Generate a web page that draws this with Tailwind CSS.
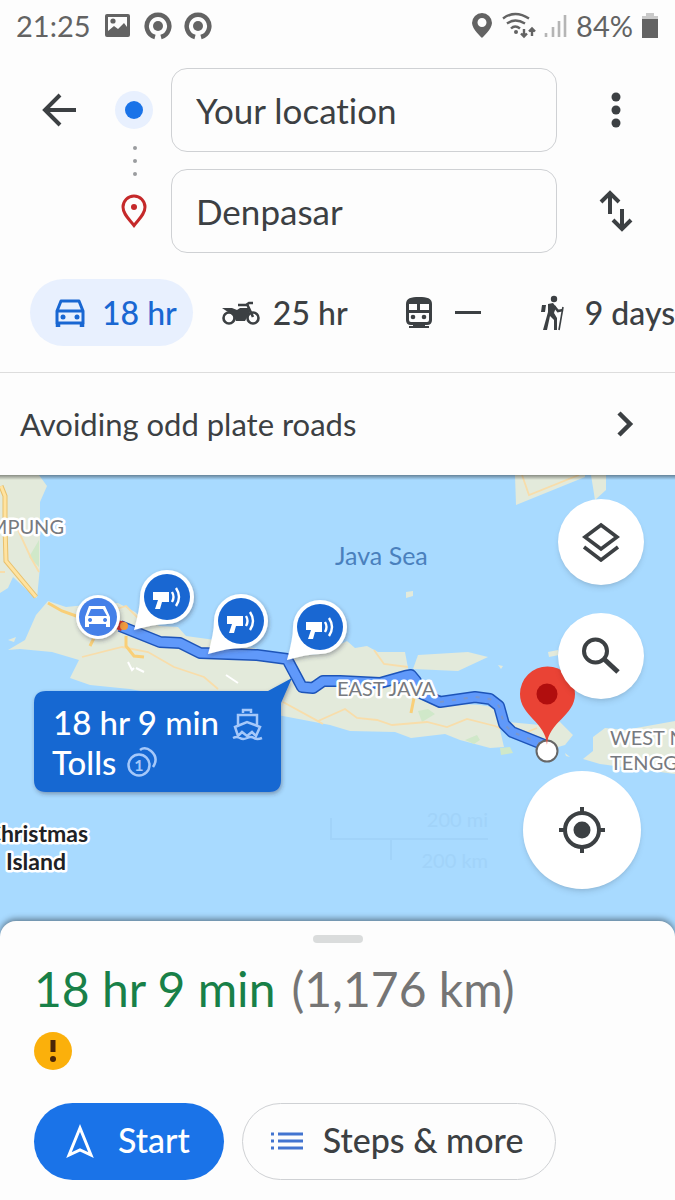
<!DOCTYPE html>
<html lang="en">
<head>
    <meta charset="UTF-8">
    <meta name="viewport" content="width=device-width, initial-scale=1.0">
    <title>Directions to Denpasar</title>
    <script src="https://cdn.jsdelivr.net/npm/@tailwindcss/browser@4"></script>
</head>
<body class="flex flex-col min-h-screen overflow-x-hidden bg-[#fdfdfd] font-['Lato',sans-serif] text-[#3c4043] [font-variant-ligatures:none]">

    <!-- Status bar -->
    <div class="flex items-center justify-between h-[52px] px-4 text-[#636363]">
        <div class="flex items-center gap-3">
            <span class="w-[76px] text-[29px]">21:25</span>
            <svg class="w-7 h-7" viewBox="0 0 28 28"><rect x="1" y="2" width="25" height="23" rx="2" fill="#636363"/><path d="M4 5h19v10l-3-4-6 6-4-3-6 5z" fill="#fdfdfd"/><circle cx="9" cy="9" r="2.600" fill="#636363"/></svg>
            <svg class="w-7 h-7" viewBox="0 0 28 28" fill="none" stroke="currentColor" stroke-width="4.500"><path d="M11 25a11.300 11.300 0 1 1 6 0"/><circle cx="14" cy="14" r="5" fill="currentColor" stroke="none"/></svg>
            <svg class="w-7 h-7" viewBox="0 0 28 28" fill="none" stroke="currentColor" stroke-width="4.500"><path d="M11 25a11.300 11.300 0 1 1 6 0"/><circle cx="14" cy="14" r="5" fill="currentColor" stroke="none"/></svg>
        </div>
        <div class="flex items-center gap-2">
            <svg class="w-5 h-7" viewBox="0 0 20 28" fill="currentColor"><path fill-rule="evenodd" d="M10 1a10 10 0 0 1 10 10c0 6-10 15-10 15S0 17 0 11A10 10 0 0 1 10 1zm0 5a4.500 4.500 0 1 0 0 9 4.500 4.500 0 0 0 0-9z"/></svg>
            <svg class="w-9 h-7" viewBox="0 0 36 28" fill="none" stroke="currentColor" stroke-width="2.400"><path d="M3 6.500q12-9 26 0M7 11.500q8-6 18 0M11 16.500q4-4 9 0"/><circle cx="16" cy="20" r="2" fill="currentColor" stroke="none"/><path d="M24 17v7M21 21.500l3 3 3-3M32 24v-7M29 19.500l3-3 3 3"/></svg>
            <svg class="w-6 h-7" viewBox="0 0 24 28" stroke="#b5b5b5" stroke-width="2.600"><path d="M2 21v4M9 15v10M15 9v16M21 3v22"/></svg>
            <span class="text-[29px]">84%</span>
            <svg class="w-[18px] h-7" viewBox="0 0 18 28"><path d="M5 1h8v3h4v6H1V4h4z" fill="#c9c9c9"/><path d="M1 7h16v19H1z" fill="#636363"/></svg>
        </div>
    </div>

    <!-- Search fields -->
    <header class="grid grid-cols-[118px_53px_1fr_118px] items-center gap-y-[17px] pt-4">
        <button type="button" aria-label="Back" class="justify-self-center">
            <svg class="w-9 h-9" viewBox="0 0 36 36" fill="none" stroke="currentColor" stroke-width="4"><path d="M35 18H4M19 3L4 18l15 15"/></svg>
        </button>
        <label for="origin" class="flex" aria-label="Origin">
            <svg class="w-9 h-[84px] overflow-visible" viewBox="0 0 36 84"><circle cx="16" cy="42" r="19" fill="#e8f0fe"/><circle cx="16" cy="42" r="9" fill="#1a73e8"/><g fill="#9a9c9f"><circle cx="17" cy="80" r="2"/><circle cx="17" cy="93" r="2"/><circle cx="17" cy="106" r="2"/></g></svg>
        </label>
        <input id="origin" type="text" value="Your location" class="w-full h-[84px] min-w-0 px-6 border border-[#cfd1d4] rounded-2xl bg-transparent text-[35px]">
        <button type="button" aria-label="More options" class="justify-self-center">
            <svg class="w-9 h-9" viewBox="0 0 36 36" fill="currentColor"><circle cx="18" cy="5" r="4.500"/><circle cx="18" cy="18" r="4.500"/><circle cx="18" cy="31" r="4.500"/></svg>
        </button>
        <span></span>
        <label for="destination" class="flex" aria-label="Destination">
            <svg class="w-9 h-9 overflow-visible" viewBox="0 0 36 36" fill="none" stroke="#c5292a" stroke-width="3"><path d="M16 32.500C11 26 5 21 5 14a11 11 0 0 1 22 0c0 7-6 12-11 18.500z"/><circle cx="16" cy="14" r="3" fill="#c5292a" stroke="none"/></svg>
        </label>
        <input id="destination" type="text" value="Denpasar" class="w-full h-[84px] min-w-0 px-6 border border-[#cfd1d4] rounded-2xl bg-transparent text-[35px]">
        <button type="button" aria-label="Swap start and end" class="justify-self-center">
            <svg class="w-9 h-11" viewBox="0 0 36 44" fill="none" stroke="currentColor" stroke-width="4"><path d="M12 25V4M3 13l9-9 9 9M24 20v20M15 31l9 9 9-9"/></svg>
        </button>
    </header>

    <!-- Travel modes -->
    <nav class="flex items-center mt-[26px] pb-[26px] pl-[30px] border-b border-[#dddddd] overflow-hidden whitespace-nowrap text-[32px] font-medium">
        <button type="button" class="flex items-center gap-4 h-[67px] shrink-0 pl-6 pr-4 rounded-full bg-[#e8f0fe] text-[#1967d2]">
            <svg class="w-8 h-8" viewBox="0 0 32 32" fill="none" stroke="currentColor" stroke-width="3"><path d="M3 14L7 4h18l4 10v12H3zM3 14h26" stroke-linejoin="round"/><path d="M4 26v4M28 26v4" stroke-width="4.500"/><circle cx="9" cy="20" r="2.500" fill="currentColor" stroke="none"/><circle cx="23" cy="20" r="2.500" fill="currentColor" stroke="none"/></svg>
            18 hr
        </button>
        <button type="button" class="flex items-center gap-3 shrink-0 ml-7">
            <svg class="w-10 h-8" viewBox="0 0 40 32" fill="none" stroke="currentColor" stroke-width="2.600"><circle cx="8" cy="21" r="5.500"/><circle cx="32" cy="21" r="5.500"/><path d="M17 8h8l3-2h4M26 7l6 13"/><path d="M1 11h10l5 2 3-2h8l2 4-5 9H15l-3-6-5-3z" fill="currentColor" stroke="none"/></svg>
            25 hr
        </button>
        <button type="button" aria-label="Transit" class="flex items-center gap-5 shrink-0 ml-[55px]">
            <svg class="w-8 h-9" viewBox="0 0 32 36"><path d="M3 9c0-6 5-7 13-7s13 1 13 7v16q0 5-5 5H8q-5 0-5-5z" fill="currentColor"/><path d="M6 31h20v2H6zM10 29h12v4H10z" fill="currentColor"/><path d="M6 9h8v6H6zM17 9h9v6h-9zM6 18h20v7q0 2-2 2H8q-2 0-2-2z" fill="#fdfdfd"/><g fill="currentColor"><circle cx="10" cy="22" r="2.300"/><circle cx="21" cy="22" r="2.300"/></g></svg>
            <svg class="w-[26px] h-1" viewBox="0 0 26 4"><path d="M0 0h26v3H0z" fill="currentColor"/></svg>
        </button>
        <button type="button" class="flex items-center gap-5 shrink-0 ml-[60px]">
            <svg class="w-6 h-9" viewBox="0 0 24 36" fill="none" stroke="currentColor"><circle cx="13" cy="4" r="3.200" fill="currentColor" stroke="none"/><path d="M1 10h4l-1 7H0z" fill="currentColor" stroke="none"/><path d="M7 9l5-1 3 4-2 6 3 5v12h-3V25l-4-4-3 14H2L7 17z" fill="currentColor" stroke="none"/><path d="M13 11l4 5 5-1" stroke-width="2.600"/><path d="M22 12l-4 23" stroke-width="1.600"/></svg>
            9 days
        </button>
    </nav>

    <a href="#" class="flex items-center justify-between h-[102px] pl-5 pr-10 text-[31px]">
        Avoiding odd plate roads
        <svg class="w-5 h-7" viewBox="0 0 20 28" fill="none" stroke="currentColor" stroke-width="4.500"><path d="M4 3l11 11L4 25"/></svg>
    </a>

    <!-- Map -->
    <main class="relative flex-1 min-h-[462px] overflow-hidden bg-[#a8daff]">
        <svg class="absolute inset-0 w-full h-full font-['Lato',sans-serif]" viewBox="0 475 675 462" preserveAspectRatio="xMidYMid slice">
            <defs>
                <filter id="shadow" x="-30%" y="-30%" width="160%" height="160%">
                    <feDropShadow dx="1" dy="2" stdDeviation="2" flood-color="#334" flood-opacity=".4"/>
                </filter>
                <linearGradient id="edge" x1="0" y1="0" x2="0" y2="1">
                    <stop offset="0" stop-color="#000" stop-opacity=".4"/>
                    <stop offset="1" stop-color="#000" stop-opacity="0"/>
                </linearGradient>
                <g id="camera">
                    <path d="M-33 33Q-27 12-27 0A27 27 0 1 1 0 27Q-13 27-33 33z" fill="#fff" filter="url(#shadow)"/>
                    <circle r="23" fill="#1967d2"/>
                    <path d="M-14-5H2V5H-5L-7 12H-12L-9 3H-14z" fill="#fff"/>
                    <path d="M5-5q3 5 0 10M9-9q6 9 0 18" fill="none" stroke="#fff" stroke-width="2.400"/>
                </g>
            </defs>

            <!-- Land -->
            <g fill="#e3eadb">
                <path d="M0 475h39l8 11-7 16v65l-3 31-10-8-14-13-5 11-8 5z"/>
                <path d="M515 475l1 30 69-28v-2zM591 475l4 25 11-10v-15z"/>
                <path d="M48 601L66 607 96 604 118 603 135 612 145 620 160 626 178 627 186 636 215 640 290 656 320 654 347 641 355 648 367 646 378 652 405 652 408 668 413 680 422 694 437 703 480 705 498 708 500 730 504 747 490 748 460 740 445 734 411 738 395 732 350 731 330 725 283 716 255 712 130 689 90 685 70 678 79 660 52 652 20 649 8 650 25 640 36 615z"/>
                <path d="M508 722L540 725 560 722 573 735 565 745 548 750 515 738z"/>
                <path d="M413 669l5-14 50-3 20 5-30 14z"/>
                <path d="M583 759l10-8v-14l12-9 20 2 50-9v53l-75-10zM406 592l7-1v5l-7 2zM548 652l10-2 1 5-10 2zM498 665l5 1-2 3z"/>
                <path d="M8 640l8-3-2 5zM565 753l5 4-4-1z"/>
            </g>
            <g fill="#d0e8c9">
                <path d="M39 540v27l-10-10zM418 711l10-2 7 5-13 8zM465 740l12-5 3 5-6 4zM500 748l10-1 3 6-12 2z"/>
            </g>
            <g fill="none" stroke="#f8ddaa" stroke-width="1.800">
                <path d="M0 572h5M18 530l13 28 8 14M522 475l7 20 50-20M96 616l30-10 20 20M82 657l40-10 26 5 26 15 30 10 14 12M283 702l40 22M283 702l35 19 27-12 12 9 20 2 15 5 35-3 20 5 20-8 28 7 22 10 20-8M374 650l10 14 24 3"/>
            </g>
            <g fill="none">
                <path d="M1 486l4 10v30l1 35 30 36" stroke="#e8c06c" stroke-width="5"/>
                <path d="M1 486l4 10v30l1 35 30 36" stroke="#ffe3a0" stroke-width="3"/>
                <path d="M48 603l14 8 14 5h12M90 646l12-24M126 636v10l8 10 10 1M414 698l-3 15" stroke="#f9cf78" stroke-width="3"/>
            </g>
            <path d="M128 662l4 8 2-2M136 668l8 4M226 675l12 8" stroke="#fff" stroke-width="2" fill="none"/>

            <!-- Route -->
            <g fill="none" stroke-linejoin="round">
                <path d="M120 626L160 642 180 643 200 653 257 655 287 659 302 687 313 688 323 681 340 681 380 683 405 676 411 675 416 681 414 690 440 702 475 697 490 699 499 706 504 724 512 732 547 746" stroke="#1d54b8" stroke-width="12"/>
                <path d="M120 626L160 642 180 643 200 653 257 655 287 659 302 687 313 688 323 681 340 681 380 683 405 676 411 675 416 681 414 690 440 702 475 697 490 699 499 706 504 724 512 732 547 746" stroke="#6099fa" stroke-width="9"/>
                <path d="M440 702L475 697 490 699 499 706 504 724 512 732 547 746" stroke="#7a97cc" stroke-width="2" stroke-dasharray="4 8"/>
            </g>
            <path d="M118 620l7 2-4 9-5-2z" fill="#d93025"/>
            <circle cx="124" cy="626" r="4" fill="#f29a3c"/>

            <!-- Map labels -->
            <g font-size="20" fill="#777a80" stroke="#fff" stroke-width="5" stroke-linejoin="round" paint-order="stroke">
                <text x="64" y="534" text-anchor="end">MPUNG</text>
                <text x="337" y="696">EAST JAVA</text>
                <text x="610" y="745">WEST NUSA</text>
                <text x="610" y="770">TENGGARA</text>
            </g>
            <text x="335" y="565" font-size="25" fill="#4a80bd">Java Sea</text>
            <g font-size="23" font-weight="700" fill="#202124" stroke="#fff" stroke-width="5" stroke-linejoin="round" paint-order="stroke">
                <text x="88" y="842" text-anchor="end">Christmas</text>
                <text x="66" y="870" text-anchor="end">Island</text>
            </g>

            <!-- Scale bar -->
            <g fill="#a1d3f9" font-size="20">
                <text x="488" y="827" text-anchor="end">200 mi</text>
                <text x="488" y="868" text-anchor="end">200 km</text>
                <path d="M331 818v21h157M391 840v20" fill="none" stroke="#a1d3f9" stroke-width="2"/>
            </g>

            <!-- Markers -->
            <g transform="translate(98 617)">
                <circle r="22" fill="#fff" filter="url(#shadow)"/>
                <circle r="19" fill="#4580e8"/>
                <path fill-rule="evenodd" d="M-9-11H7L12 0V10H8V7H-9V10H-13V0zM-7-8L-10-1H9L5-8zM-8 1a2 2 0 1 0 .1 0zM7 1a2 2 0 1 0 .1 0z" fill="#fff"/>
            </g>
            <use href="#camera" x="167" y="597"/>
            <use href="#camera" x="241" y="621"/>
            <use href="#camera" x="320" y="627"/>
            <circle cx="547" cy="751" r="10.500" fill="#fff" stroke="#666" stroke-width="2"/>
            <path d="M547 745C546 722 520 716 520 694a27 27 0 0 1 55 0C575 716 548 722 547 745z" fill="#ea4335"/>
            <circle cx="547" cy="694" r="10.500" fill="#b10e0e"/>

            <!-- Route callout -->
            <path d="M46 691H268L292 678 281 703V780q0 12-12 12H46q-12 0-12-12V703q0-12 12-12z" fill="#1967d2" filter="url(#shadow)"/>
            <g font-size="33" font-weight="500" fill="#fff">
                <text x="53" y="735">18 hr 9 min</text>
                <text x="52" y="775">Tolls</text>
            </g>
            <g fill="none" stroke="#a5c8fa" stroke-width="2.500">
                <path d="M238 725v-10h19v10M243 713v-3h8v3M235 727l12-5 13 5-4 9-4-4-5 4-5-4-4 4zM233 738q4-2 7 0t7 0 7 0 8 0"/>
                <circle cx="139" cy="765" r="10.500"/>
                <path d="M140 750q5-4 11 1 8 7 2 16"/>
            </g>
            <text x="139" y="771" text-anchor="middle" font-size="16" font-weight="700" fill="#a5c8fa">1</text>
            <path d="M0 475h675v5H0z" fill="url(#edge)"/>
        </svg>

        <div class="absolute top-6 right-[31px] flex flex-col gap-7">
            <button type="button" aria-label="Layers" class="flex items-center justify-center size-[86px] rounded-full bg-white shadow-md">
                <svg class="w-10 h-10" viewBox="0 0 40 40" fill="none" stroke="currentColor" stroke-width="3.600"><path d="M20 3l16 12-16 12L4 15zM3 25l17 13 17-13"/></svg>
            </button>
            <button type="button" aria-label="Search along route" class="flex items-center justify-center size-[86px] rounded-full bg-white shadow-md">
                <svg class="w-10 h-10" viewBox="0 0 40 40" fill="none" stroke="currentColor" stroke-width="4"><circle cx="14.500" cy="15" r="11.500"/><path d="M23 23l14 13" stroke-width="5"/></svg>
            </button>
        </div>
        <button type="button" aria-label="My location" class="absolute bottom-12 right-[34px] flex items-center justify-center size-[118px] rounded-full bg-white shadow-md">
            <svg class="w-12 h-12" viewBox="0 0 48 48" fill="none" stroke="currentColor" stroke-width="4"><circle cx="24" cy="24" r="17"/><circle cx="24" cy="24" r="8.500" fill="currentColor" stroke="none"/><path d="M24 1v7M24 40v7M1 24h7M40 24h7"/></svg>
        </button>
    </main>

    <!-- Bottom sheet -->
    <section class="relative -mt-4 px-[34px] pt-[14px] pb-5 rounded-t-2xl bg-[#fdfdfd] shadow-[0_-2px_6px_rgba(0,0,0,0.45)]">
        <div class="w-[50px] h-2 mx-auto rounded-full bg-[#dadcdc]"></div>
        <h1 class="flex gap-4 mt-4 mb-[13px] text-[48px] leading-[60px] whitespace-nowrap">
            <span class="text-[#188048]">18 hr 9 min</span>
            <span class="text-[#757575]">(1,176 km)</span>
        </h1>
        <svg class="w-[38px] h-[38px]" viewBox="0 0 38 38"><circle cx="19" cy="19" r="19" fill="#fbb00b"/><path d="M16.500 8h5v12h-5z" fill="#4a2508"/><circle cx="19" cy="27" r="3" fill="#4a2508"/></svg>
        <div class="flex gap-[18px] mt-[33px] text-[34px] font-medium">
            <button type="button" class="flex items-center gap-6 h-[77px] pl-8 pr-[34px] pb-1 rounded-full bg-[#1a73e8] text-white">
                <svg class="w-7 h-9" viewBox="0 0 28 36" fill="none" stroke="currentColor" stroke-width="3"><path d="M14 6L3 33l11-5 11 5z"/></svg>
                Start
            </button>
            <button type="button" class="flex items-center gap-5 h-[77px] pl-7 pr-8 pb-1 border border-[#cfd1d4] rounded-full">
                <svg class="w-8 h-6" viewBox="0 0 32 24" fill="none" stroke="#4274d0" stroke-width="3"><path d="M0 6h3M0 13h3M0 20h3M7 6h25M7 13h25M7 20h25"/></svg>
                Steps &amp; more
            </button>
        </div>
    </section>

</body>
</html>
